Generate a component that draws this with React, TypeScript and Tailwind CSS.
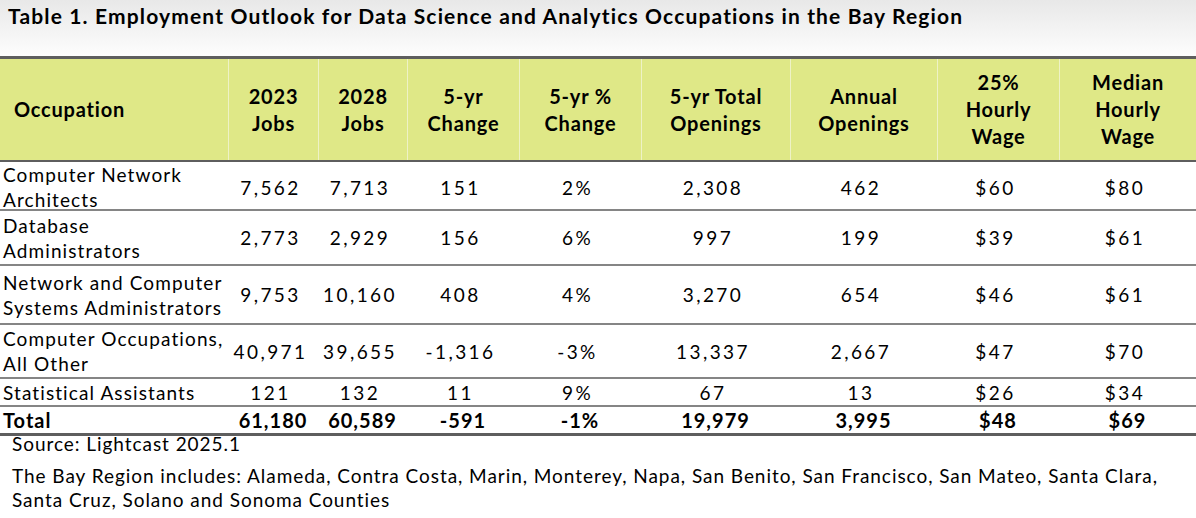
import React from "react";

const cols = "grid grid-cols-[228px_90px_89px_112px_122px_149px_147px_122px_137px]";

type Row = { name: string[]; v: string[]; h: string };

const rows: Row[] = [
  { name: ["Computer Network", "Architects"], v: ["7,562", "7,713", "151", "2%", "2,308", "462", "$60", "$80"], h: "h-[49px]" },
  { name: ["Database", "Administrators"], v: ["2,773", "2,929", "156", "6%", "997", "199", "$39", "$61"], h: "h-[55px]" },
  { name: ["Network and Computer", "Systems Administrators"], v: ["9,753", "10,160", "408", "4%", "3,270", "654", "$46", "$61"], h: "h-[59px]" },
  { name: ["Computer Occupations,", "All Other"], v: ["40,971", "39,655", "-1,316", "-3%", "13,337", "2,667", "$47", "$70"], h: "h-[54px]" },
  { name: ["Statistical Assistants"], v: ["121", "132", "11", "9%", "67", "13", "$26", "$34"], h: "h-[28px]" },
];

const headers: string[][] = [
  ["2023", "Jobs"],
  ["2028", "Jobs"],
  ["5-yr", "Change"],
  ["5-yr %", "Change"],
  ["5-yr Total", "Openings"],
  ["Annual", "Openings"],
  ["25%", "Hourly", "Wage"],
  ["Median", "Hourly", "Wage"],
];

export default function App() {
  return (
    <div className="w-[1196px] h-[518px] bg-white text-black overflow-hidden font-['Lato',sans-serif]">
      <div className="h-[56px] bg-gradient-to-b from-[#e8e8e8] to-[#fdfdfd] pl-2 pt-[4px]">
        <h1 className="text-[21px] leading-[24px] font-bold tracking-[1.15px]">
          Table 1. Employment Outlook for Data Science and Analytics Occupations in the Bay Region
        </h1>
      </div>
      <div className="border-t-[3px] border-[#5e5e5e]">
        <div className={`${cols} h-[103px] bg-[#dfe887] border-b-[2px] border-[#5e5e5e] text-[20px] leading-[27px] font-bold tracking-[0.8px]`}>
          <div className="flex items-center pl-[14px]">Occupation</div>
          {headers.map((h, i) => (
            <div key={i} className="flex flex-col items-center justify-center text-center border-l border-[#eef2c6]">
              {h.map((l, j) => (
                <span key={j}>{l}</span>
              ))}
            </div>
          ))}
        </div>
        {rows.map((r, i) => (
          <div key={i} className={`${cols} ${r.h} border-b-[2px] border-[#858585] text-[19px] leading-[25px]`}>
            <div className="flex flex-col justify-center pl-[3px] tracking-[1.1px] whitespace-nowrap">
              {r.name.map((l, j) => (
                <span key={j}>{l}</span>
              ))}
            </div>
            {r.v.map((v, j) => (
              <div key={j} className="flex items-center justify-center pr-[5px] tracking-[2.4px]">
                {v}
              </div>
            ))}
          </div>
        ))}
        <div className={`${cols} h-[29px] border-b-[3px] border-[#5e5e5e] text-[20px] leading-[25px] font-bold tracking-[1px]`}>
          <div className="flex items-center pl-[3px]">Total</div>
          {["61,180", "60,589", "-591", "-1%", "19,979", "3,995", "$48", "$69"].map((v, j) => (
            <div key={j} className="flex items-center justify-center">
              {v}
            </div>
          ))}
        </div>
      </div>
      <div className="pl-[12px] text-[19px] leading-[24px] tracking-[0.95px] whitespace-nowrap">
        <p className="leading-[14px] pt-[1px]">Source: Lightcast 2025.1</p>
        <p className="pt-[13px]">
          The Bay Region includes: Alameda, Contra Costa, Marin, Monterey, Napa, San Benito, San Francisco, San Mateo, Santa Clara,
          <br />
          Santa Cruz, Solano and Sonoma Counties
        </p>
      </div>
    </div>
  );
}
